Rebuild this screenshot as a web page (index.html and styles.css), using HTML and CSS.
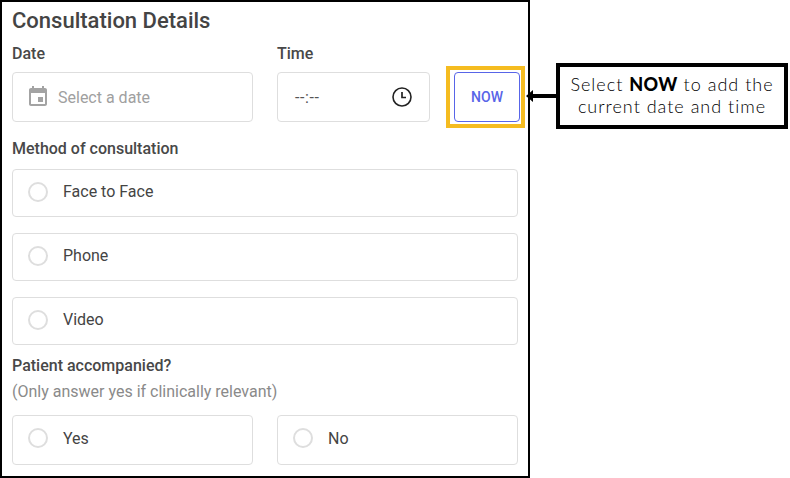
FILE: index.html
```html
<!DOCTYPE html>
<html lang="en">
<head>
<meta charset="utf-8">
<title>Consultation Details</title>
<link rel="stylesheet" href="styles.css">
</head>
<body>
<div class="page">
  <main class="panel">
    <h1 class="title">Consultation Details</h1>
    <div class="datetime">
      <div class="col-date">
        <div class="label">Date</div>
        <div class="field">
          <svg class="cal" width="24" height="24" viewBox="0 0 24 24"><path fill="#a3a3a3" d="M17 12h-5v5h5v-5zM16 1v2H8V1H6v2H5c-1.110 0-1.990.9-1.990 2L3 19c0 1.100.89 2 2 2h14c1.100 0 2-.9 2-2V5c0-1.100-.9-2-2-2h-1V1h-2zm3 18H5V8h14v11z"/></svg>
          <span class="placeholder">Select a date</span>
        </div>
      </div>
      <div class="col-time">
        <div class="label">Time</div>
        <div class="field field-time">
          <span class="time-value">--:--</span>
          <svg width="24" height="24" viewBox="0 0 24 24"><circle cx="12" cy="12" r="9" fill="none" stroke="#222" stroke-width="1.600"/><path d="M12 7v5.500h4" fill="none" stroke="#222" stroke-width="1.700"/></svg>
        </div>
      </div>
      <div class="highlight"><button class="now" type="button">NOW</button></div>
    </div>
    <div class="label label-method">Method of consultation</div>
    <div class="options">
      <div class="option"><span class="radio"></span>Face to Face</div>
      <div class="option"><span class="radio"></span>Phone</div>
      <div class="option"><span class="radio"></span>Video</div>
    </div>
    <div class="label label-patient">Patient accompanied?</div>
    <div class="hint">(Only answer yes if clinically relevant)</div>
    <div class="yesno">
      <div class="option option-half"><span class="radio"></span>Yes</div>
      <div class="option option-half"><span class="radio"></span>No</div>
    </div>
  </main>
  <aside class="annotation">
    <svg class="arrow" width="30" height="14" viewBox="0 0 30 14"><path d="M0 7l7-6v4h23v4H7v4z" fill="#000"/></svg>
    <div class="callout">Select <b>NOW</b> to add the<br>current date and time</div>
  </aside>
</div>
</body>
</html>
```
FILE: styles.css
```css
* { box-sizing: border-box; }
html, body { margin: 0; padding: 0; background: #fff; }
body { font-family: Roboto, "Liberation Sans", sans-serif; color: #3c3c3c; }
.page { display: flex; align-items: flex-start; width: 790px; height: 478px; overflow: hidden; }
.panel { width: 530px; height: 478px; border: 2px solid #000; padding: 0 10px; flex: none; }
.title { margin: 7px 0 0; font-size: 22px; line-height: 24px; font-weight: 500; color: #444; }
.label { font-size: 16px; line-height: 20px; font-weight: 500; color: #484848; }
.datetime { display: flex; margin-top: 11px; }
.col-date { width: 241px; margin-right: 24px; flex: none; }
.col-time { width: 153px; flex: none; }
.datetime .label { margin-bottom: 8px; }
.field { height: 50px; border: 1px solid #dedede; border-radius: 4px; display: flex; align-items: center; }
.cal { margin-left: 13px; margin-right: 8px; flex: none; }
.placeholder { font-size: 16px; color: #a0a0a0; }
.field-time { justify-content: space-between; padding: 0 15px 0 17px; }
.time-value { font-size: 16px; letter-spacing: 0.6px; color: #555; }
.highlight { flex: none; align-self: flex-end; margin: 0 0 -6px 16px; border: 4px solid #f5bc20; padding: 2px 1px 2px 4px; }
.now { display: block; width: 66px; height: 50px; padding: 0; border: 1px solid #5865e8; border-radius: 4px; background: #fff; color: #5865e8; font: 500 14px Roboto, sans-serif; }
.label-method { margin-top: 17px; }
.options { display: flex; flex-direction: column; gap: 16px; margin-top: 10px; }
.option { height: 48px; width: 506px; border: 1px solid #dedede; border-radius: 4px; display: flex; align-items: center; padding: 0 0 4px 15px; font-size: 16px; color: #444; }
.radio { width: 20px; height: 20px; border: 2px solid #dedede; border-radius: 50%; margin-right: 15px; flex: none; position: relative; top: 1px; }
.option-half .radio { top: 0; }
.label-patient { margin-top: 11px; }
.hint { margin-top: 6px; font-size: 16px; line-height: 20px; color: #8a8a8a; }
.yesno { display: flex; gap: 24px; margin-top: 13px; }
.option-half { width: 241px; height: 50px; }
.annotation { display: flex; align-items: center; margin-top: 63px; margin-left: -4px; }
.arrow { flex: none; }
.callout { width: 232px; height: 66px; border: 4px solid #000; text-align: center; font-family: "Lato", sans-serif; font-weight: 300; font-size: 18px; line-height: 22px; letter-spacing: 1px; color: #000; padding-top: 6px; }
.callout b { font-weight: 900; letter-spacing: 0.4px; }
```
